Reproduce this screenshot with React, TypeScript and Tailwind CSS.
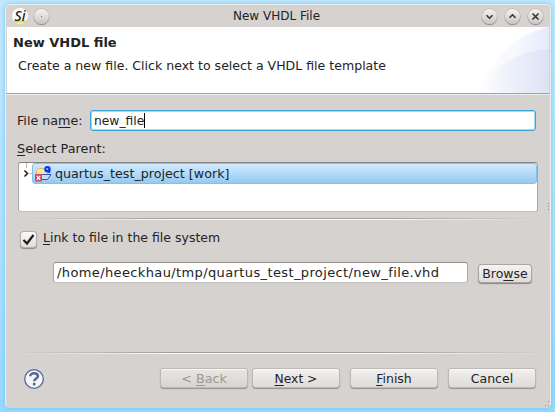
import type { ReactNode } from "react";

function TitleButton({ children }: { children: ReactNode }) {
  return (
    <span className="flex h-[15px] w-[15px] items-center justify-center rounded-full bg-linear-to-b from-[#f5f4f3] to-[#c9c6c3] shadow-[0_0_0_0.5px_#aaa7a4,0_1px_1px_#777]">
      <svg width="15" height="15" viewBox="0 0 15 15" fill="none" stroke="#353535" strokeWidth="1.6">
        {children}
      </svg>
    </span>
  );
}

function Separator() {
  return (
    <div className="h-[2px] w-full mask-[linear-gradient(to_right,transparent,black_30%,black_70%,transparent)]">
      <div className="h-px bg-[#a29e9b]" />
      <div className="h-px bg-[#fbfafa]" />
    </div>
  );
}

function Button({ children, disabled = false }: { children: ReactNode; disabled?: boolean }) {
  return (
    <button
      disabled={disabled}
      className="flex h-[18px] w-[86px] items-center justify-center rounded-[3px] bg-linear-to-b from-[#f2f1f0] to-[#dedbd8] pt-[2px] shadow-[inset_0_1px_0_#fafafa,0_0_0_1px_#bdb9b5,0_1px_1px_1px_#96928f] disabled:from-[#e8e6e4] disabled:to-[#d8d4d1] disabled:text-[#9b9794]"
    >
      {children}
    </button>
  );
}

function Key({ children }: { children: ReactNode }) {
  return <span className="underline decoration-1 underline-offset-2">{children}</span>;
}

function ProjectIcon() {
  return (
    <svg width="17" height="16" viewBox="0 0 17 16">
      <path d="M1.5 9V4.5L3.5 2.5h5l1.5 2H12.5V9Z" fill="#fbe3ac" stroke="#e0b469" />
      <path d="M3 13.5L5.5 8.5h10.5L12.5 13.5Z" fill="#cbdcf6" stroke="#3454a8" />
      <circle cx="12.5" cy="3.2" r="3.2" fill="#0b35ef" />
      <path d="M14.3 4L14.3 7" stroke="#0b35ef" strokeWidth="1.8" />
      <circle cx="12.3" cy="3" r="1" fill="#a8bcff" />
      <rect x="0" y="8" width="7" height="7.5" fill="#d9465a" />
      <path d="M1.8 9.8L5.2 13.8M5.2 9.8L1.8 13.8" stroke="white" strokeWidth="1.3" />
    </svg>
  );
}

export default function App() {
  return (
    <div className="h-[412px] w-[555px] overflow-hidden bg-linear-to-b from-[#c4e8fd] via-[#b5e2fd] to-[#97d8fd] pt-[4px] pl-[5px] font-['DejaVu_Sans',sans-serif] text-[12px] leading-[16px] text-[#232323]">
      <div className="relative flex h-[404px] w-[546px] flex-col overflow-hidden rounded-[5px] border border-b-0 border-[#efeeed] bg-[#d6d2cf] shadow-[0_0_5px_#65c5fb]">
        <header className="flex h-[22px] shrink-0 items-center px-[6px]">
          <span className="-mt-px flex h-[16px] w-[16px] items-center justify-center rounded-full bg-linear-to-b from-[#fafafa] from-72% via-[#dedc10] via-84% to-[#f4f4b8] font-['Noto_Sans',sans-serif] text-[14px] leading-[16px] font-medium italic">
            Si
          </span>
          <span className="ml-[6px]">
            <TitleButton><circle cx="7.5" cy="7.5" r="0.5" fill="#444" stroke="none" /></TitleButton>
          </span>
          <h1 className="ml-[184px] flex-1 text-[12px]">New VHDL File</h1>
          <div className="mr-px flex gap-[8px]">
            <TitleButton><path d="M4.5 6.2L7.5 9.2L10.5 6.2" /></TitleButton>
            <TitleButton><path d="M4.5 8.8L7.5 5.8L10.5 8.8" /></TitleButton>
            <TitleButton><path d="M4.5 4.5L10.5 10.5M10.5 4.5L4.5 10.5" /></TitleButton>
          </div>
        </header>

        <section className="ml-px flex h-[66px] w-[542px] shrink-0 justify-between bg-white">
          <div className="shrink-0 pt-[8px] whitespace-nowrap">
            <h2 className="pl-[6px] text-[13px] leading-[16px] font-bold">New VHDL file</h2>
            <p className="mt-[7px] pl-[11px] text-[12.55px]">Create a new file. Click next to select a VHDL file template</p>
          </div>
          <svg className="shrink-0" width="72" height="66" viewBox="0 0 72 66">
            <defs>
              <linearGradient id="sweep"><stop stopColor="white" /><stop offset="1" stopColor="#eef2fb" /></linearGradient>
              <linearGradient id="crest"><stop stopColor="#f8faff" /><stop offset="1" stopColor="#e5eafa" /></linearGradient>
              <linearGradient id="hill"><stop stopColor="white" /><stop offset="1" stopColor="#dbe2f5" /></linearGradient>
            </defs>
            <path d="M0 66C14 34 39 5 72 0V66Z" fill="url(#sweep)" />
            <path d="M34 33C44 12 57 3 72 0V66H34Z" fill="url(#crest)" />
            <path d="M0 66C14 40 43 23 72 22V66Z" fill="url(#hill)" />
          </svg>
        </section>
        <div className="h-px shrink-0 bg-[#a5a3a1]" />
        <div className="h-px shrink-0 bg-[#efedec]" />

        <main className="flex flex-1 flex-col">
          <div className="mt-[15px] flex h-[21px] items-center pl-[11px]">
            <label className="w-[73px] text-[12.7px] whitespace-nowrap">File na<Key>m</Key>e:</label>
            <div className="flex h-[21px] w-[446px] items-center rounded-[3px] border border-[#3da3d8] bg-white pl-[3px] text-[12.3px] shadow-[inset_0_0_0_1px_#a1dcf7]">
              new_file<span className="h-[15px] w-px bg-black" />
            </div>
          </div>
          <p className="mt-[10px] pl-[11px] text-[12.8px]"><Key>S</Key>elect Parent:</p>
          <div className="mt-[5px] ml-[12px] flex h-[50px] w-[520px] items-start rounded-[3px] border border-t-[#858280] border-r-[#aaa6a3] border-b-[#c4c0bd] border-l-[#aaa6a3] bg-white">
            <svg width="13" height="20" viewBox="0 0 13 20" fill="none">
              <path d="M7.5 0V5M11 10.5H13" stroke="#b7b4b2" />
              <path d="M5.5 7.5L8.5 10.5L5.5 13.5" stroke="#222" strokeWidth="1.6" />
            </svg>
            <div className="flex h-[21px] flex-1 items-center rounded-[3px] border border-[#86bfe8] bg-linear-to-b from-[#d1eaff] to-[#95caf1] pl-[2px]">
              <ProjectIcon />
              <span className="ml-[3px] text-[12.7px]">quartus_test_project [work]</span>
            </div>
          </div>
          <div className="mt-[6px] px-[12px]"><Separator /></div>
          <label className="mt-[10px] flex h-[18px] items-center pl-[15px]">
            <span className="flex h-[15px] w-[15px] items-center justify-center rounded-[3px] bg-linear-to-b from-[#fafafa] to-[#dfdddb] shadow-[0_0_0_1px_#b4b0ad,0_1px_1px_1px_#8c8885]">
              <svg width="13" height="13" viewBox="0 0 13 13" fill="none" stroke="#1d1d1d" strokeWidth="2.2"><path d="M1.5 7L5 10.5L11.5 2" /></svg>
            </span>
            <span className="-mt-[2px] ml-[7px] text-[12.5px]"><Key>L</Key>ink to file in the file system</span>
          </label>
          <div className="mt-[14px] flex h-[21px] pl-[47px]">
            <div className="flex w-[415px] items-center rounded-[3px] border border-t-[#918e8b] border-r-[#aaa6a3] border-b-[#c4c0bd] border-l-[#aaa6a3] bg-white pl-[3px] text-[13px] tracking-[0.38px]">
              /home/heeckhau/tmp/quartus_test_project/new_file.vhd
            </div>
            <button className="mt-[3px] ml-[11px] flex h-[17px] w-[52px] items-center justify-center rounded-[3px] bg-linear-to-b from-[#f5f4f3] to-[#dfdcd9] shadow-[0_0_0_1px_#aaa6a3,0_1px_1px_1px_#858280]">
              <span className="text-[12.5px]">Bro<Key>w</Key>se</span>
            </button>
          </div>
        </main>

        <footer className="h-[56px] shrink-0">
          <div className="px-[6px]"><Separator /></div>
          <div className="mt-[13px] flex items-center pl-[18px]">
            <svg className="mt-[2px]" width="20" height="20" viewBox="0 0 20 20">
              <circle cx="10" cy="10" r="9.3" fill="#f5f5f7" stroke="#546b95" strokeWidth="1.3" />
              <path d="M6.2 7.3C6.2 3.2 13.9 3.4 13.9 7.2C13.9 9.5 10.2 9.4 10.2 12.3" fill="none" stroke="#526a96" strokeWidth="2.5" />
              <circle cx="10.2" cy="15" r="1.5" fill="#526a96" />
            </svg>
            <div className="ml-[117px] flex gap-[6px]">
              <Button disabled><span className="text-[12.7px]">&lt; <Key>B</Key>ack</span></Button>
              <Button><span className="text-[12.3px]"><Key>N</Key>ext &gt;</span></Button>
            </div>
            <div className="ml-[12px] flex gap-[12px]">
              <Button><span className="text-[12.5px]"><Key>F</Key>inish</span></Button>
              <Button><span className="text-[12.5px]">Cancel</span></Button>
            </div>
          </div>
        </footer>
        <svg className="absolute right-0 bottom-0" width="7" height="7" fill="#918e8b"><path d="M5 0h1v1H5zM2 4h1v1H2zM5 4h1v1H5z" /></svg>
        <svg className="absolute top-[198px] right-0" width="2" height="8" fill="#85817e"><path d="M0 0h1v1H0zM0 3h1v1H0zM0 6h1v1H0z" /></svg>
      </div>
    </div>
  );
}
